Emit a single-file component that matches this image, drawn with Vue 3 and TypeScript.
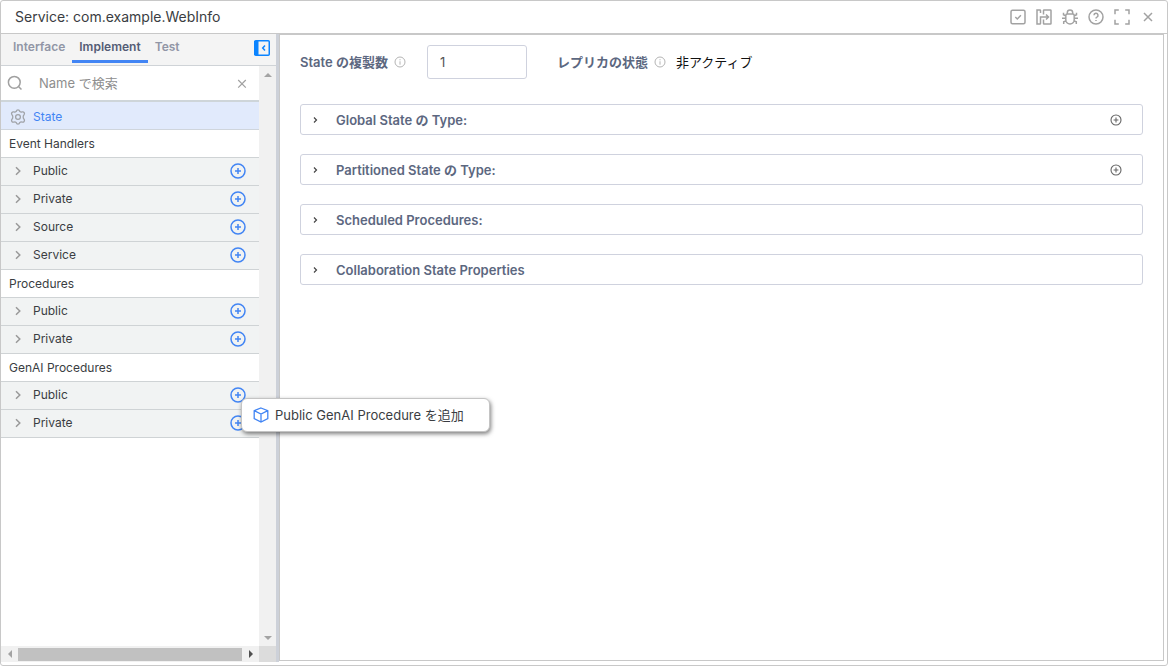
<script setup lang="ts">
import { ref } from 'vue'

interface Row {
  label: string
  menu?: boolean
}
interface Group {
  title: string
  rows: Row[]
}

const tabs = ['Interface', 'Implement', 'Test']
const activeTab = ref('Implement')
const search = ref('')
const replicas = ref('1')

const groups: Group[] = [
  { title: 'Event Handlers', rows: [{ label: 'Public' }, { label: 'Private' }, { label: 'Source' }, { label: 'Service' }] },
  { title: 'Procedures', rows: [{ label: 'Public' }, { label: 'Private' }] },
  { title: 'GenAI Procedures', rows: [{ label: 'Public', menu: true }, { label: 'Private' }] },
]

const sections = [
  { title: 'Global State の Type:', add: true },
  { title: 'Partitioned State の Type:', add: true },
  { title: 'Scheduled Procedures:', add: false },
  { title: 'Collaboration State Properties', add: false },
]
</script>

<template>
  <div class="window">
    <header class="titlebar">
      <h1>Service: com.example.WebInfo</h1>
      <div class="tools">
        <button aria-label="Validate">
          <svg viewBox="0 0 16 16"><rect x="1" y="1.2" width="14" height="13.6" rx="1.5" /><path d="M5.3 8l2 2 3.6-3.8" /></svg>
        </button>
        <button aria-label="References">
          <svg viewBox="0 0 16 16"><path d="M4.500 4V1.600Q4.500 1 3.900 1H1v14h2.900q.6 0 .6-.6V8H12.500M7.500 5.500V1.600q0-.6.6-.6h6.300q.6 0 .6.6v12.800q0 .6-.6.6H8.100q-.6 0-.6-.6V10.500M10 5.500L12.500 8 10 10.500" /></svg>
        </button>
        <button aria-label="Debug">
          <svg viewBox="0 0 16 16"><path d="M3.800 6.500Q3.800 5 5.300 5h5.400Q12.200 5 12.200 6.500V10.800a4.200 4.200 0 0 1-8.400 0zM5.300 5V3.700a2.700 2.700 0 0 1 5.400 0V5M4 7L1.500 5.800V3.800M12 7l2.500-1.200V3.800M4 9.300H0M12 9.300h4M4.500 11.600L1.700 12.800V15M11.500 11.600l2.800 1.200V15" /></svg>
        </button>
        <button aria-label="Help">
          <svg viewBox="0 0 16 16"><circle cx="8" cy="8" r="7" /><path d="M6 6.300a2 2 0 1 1 2.900 1.800Q8 8.500 8 9.500M8 10.900v1.200" /></svg>
        </button>
        <button aria-label="Full screen">
          <svg viewBox="0 0 16 16"><path d="M1 5.200V1h3.800M11.200 1H15v4.200M15 10.800V15h-3.800M4.800 15H1v-4.200" /></svg>
        </button>
        <button aria-label="Close">
          <svg viewBox="0 0 16 16"><path d="M4 4l8 8M12 4l-8 8" /></svg>
        </button>
      </div>
    </header>

    <div class="body">
      <aside class="sidebar">
        <nav class="tabs">
          <button v-for="t in tabs" :key="t" :class="{ active: t === activeTab }" @click="activeTab = t">{{ t }}</button>
          <button class="collapse" aria-label="Collapse panel">
            <svg viewBox="0 0 16 16"><rect x=".75" y=".75" width="14.5" height="14.5" rx="1" /><path class="fill" d="M0 1h4.500v14H0z" /><path d="M11 5.500L8.700 8l2.300 2.500" /></svg>
          </button>
        </nav>

        <div class="scroller">
          <div class="list">
            <div class="search">
              <svg class="lens" viewBox="0 0 16 16"><circle cx="7.300" cy="7.300" r="5.900" /><path d="M11.500 11.500l3 3" /></svg>
              <input v-model="search" type="text" placeholder="Name で検索" aria-label="Name で検索" />
              <button aria-label="Clear">
                <svg viewBox="0 0 16 16"><path d="M4.200 5l7.600 7.600M11.800 5l-7.600 7.600" /></svg>
              </button>
            </div>
            <a class="state" href="#state">
              <svg viewBox="0 0 16 16"><path d="M6.300 2.300Q6.600.8 8 .8T9.700 2.300L10.600 3Q11.200 3.200 12 2.900q1.500-.4 2.200.8t-.3 2.300Q13.200 6.600 13.200 8t.7 2q1 1.100.3 2.300t-2.200.8q-.8-.3-1.400-.1l-.9.7Q9.400 15.200 8 15.200T6.300 13.700L5.400 13Q4.800 12.800 4 13.100q-1.500.4-2.200-.8T2.100 10Q2.800 9.400 2.800 8T2.100 6q-1-1.100-.3-2.300T4 2.900q.8.300 1.400.1z" /><circle cx="8" cy="8" r="2.400" /></svg>
              <span>State</span>
            </a>
            <section v-for="g in groups" :key="g.title">
              <h2>{{ g.title }}</h2>
              <div v-for="r in g.rows" :key="r.label" class="row">
                <button class="toggle">
                  <svg viewBox="0 0 16 16"><path d="M6 4.300L9.800 8 6 11.700" /></svg>
                  <span>{{ r.label }}</span>
                </button>
                <button class="add" :aria-label="`${g.title} ${r.label} を追加`">
                  <svg viewBox="0 0 16 16"><circle cx="8" cy="8" r="7" /><path d="M8 5v6M5 8h6" /></svg>
                </button>
                <div v-if="r.menu" class="menu">
                  <button>
                    <svg viewBox="0 0 16 16"><path d="M8 1l6.800 2.700v8L8 15l-6.800-3.300v-8zM1.200 3.700L8 7l6.800-3.300M8 7v8" /></svg>
                    <span>Public GenAI Procedure を追加</span>
                  </button>
                </div>
              </div>
            </section>
          </div>
          <div class="vbar">
            <button aria-label="Scroll up"><svg viewBox="0 0 8 8"><path d="M0 6h8L4 2z" /></svg></button>
            <button aria-label="Scroll down"><svg viewBox="0 0 8 8"><path d="M0 2h8L4 6z" /></svg></button>
          </div>
        </div>
        <div class="hbar">
          <button aria-label="Scroll left"><svg viewBox="0 0 8 8"><path d="M6 0v8L2 4z" /></svg></button>
          <div class="thumb"></div>
          <button class="dark" aria-label="Scroll right"><svg viewBox="0 0 8 8"><path d="M2 0v8l4-4z" /></svg></button>
          <div class="corner"></div>
        </div>
      </aside>

      <div class="divider"></div>

      <main class="panel">
        <div class="fields">
          <label for="replicas">State の複製数</label>
          <svg class="info" viewBox="0 0 12 12"><circle cx="6" cy="6" r="5" /><path d="M6 5.300v3.400M6 3.200v1.100" /></svg>
          <input id="replicas" v-model="replicas" type="text" />
          <span class="caption">レプリカの状態</span>
          <svg class="info" viewBox="0 0 12 12"><circle cx="6" cy="6" r="5" /><path d="M6 5.300v3.400M6 3.200v1.100" /></svg>
          <span class="status">非アクティブ</span>
        </div>
        <div class="sections">
          <div v-for="s in sections" :key="s.title" class="section">
            <button class="expand">
              <svg viewBox="0 0 8 8"><path d="M3 1.500L5.500 4 3 6.500" /></svg>
              <span>{{ s.title }}</span>
            </button>
            <button v-if="s.add" class="plus" :aria-label="`${s.title} add`">
              <svg viewBox="0 0 12 12"><circle cx="6" cy="6" r="5" /><path d="M6 3.600v4.800M3.600 6h4.800" /></svg>
            </button>
          </div>
        </div>
      </main>
    </div>
  </div>
</template>

<style>
body {
  margin: 0;
  background: #fff;
}
</style>

<style scoped>
* {
  box-sizing: border-box;
}
.window {
  min-height: 100vh;
  display: flex;
  flex-direction: column;
  border: 1px solid #c8c8c8;
  border-radius: 3px;
  padding-bottom: 3px;
  background: #fff;
  color: #3a3d42;
  font: 13px/20px Inter, "Noto Sans CJK JP", sans-serif;
}
button {
  display: flex;
  align-items: center;
  margin: 0;
  padding: 0;
  border: 0;
  background: none;
  color: inherit;
  font: inherit;
  cursor: pointer;
}
svg {
  display: block;
  flex: none;
  width: 16px;
  height: 16px;
  fill: none;
  stroke: currentColor;
  stroke-width: 1.5;
}
.titlebar {
  display: flex;
  align-items: center;
  justify-content: space-between;
  height: 33px;
  padding: 0 11px 0 14px;
  border-bottom: 1px solid #c8c8c8;
}
h1 {
  margin: 0;
  font-size: 14px;
  font-weight: 400;
}
.tools {
  display: flex;
  gap: 10px;
  color: #a2a2a2;
}
.body {
  flex: 1;
  display: flex;
  padding-right: 3px;
}
.sidebar {
  width: 275px;
  flex: none;
  display: flex;
  flex-direction: column;
}
.tabs {
  display: flex;
  align-items: flex-start;
  height: 32px;
  padding: 0 6px 0 5px;
  border-bottom: 1px solid #cfd3d7;
  background: #f4f4f4;
}
.tabs button {
  height: 29px;
  padding: 0 7px 1px;
  border-bottom: 3px solid transparent;
  color: #9196a6;
  font-size: 12px;
  font-weight: 600;
}
.tabs .active {
  border-color: #4285f4;
  color: #545d76;
}
.tabs .collapse {
  height: 28px;
  margin-left: auto;
  padding: 0;
  border: 0;
  color: #0b84ff;
}
.fill {
  fill: currentColor;
  stroke: none;
}
.scroller {
  flex: 1;
  display: flex;
}
.list {
  flex: 1;
  min-width: 0;
}
.search {
  display: flex;
  align-items: center;
  height: 36px;
  padding: 0 9px 0 6px;
  border-bottom: 2px solid #ced5d9;
  color: #a0a0a0;
}
.search input {
  flex: 1;
  min-width: 0;
  padding: 0;
  margin-left: 16px;
  border: 0;
  outline: 0;
  background: none;
  color: #3a3d42;
  font: inherit;
}
.search input::placeholder {
  color: #8e8e8e;
  opacity: 1;
}
.search button svg {
  stroke-width: 1.2;
}
.state {
  display: flex;
  align-items: center;
  gap: 7px;
  height: 28px;
  padding: 2px 9px 0;
  border-bottom: 1px solid #cfd5dc;
  background: #e1eafc;
  color: #4285f4;
  font-size: 12px;
  text-decoration: none;
}
.state svg {
  color: #a0a3a8;
  stroke-width: 1.3;
}
h2 {
  height: 28px;
  margin: 0;
  padding: 0 8px;
  border-bottom: 1px solid #cfd3d5;
  font-size: 12px;
  font-weight: 400;
  line-height: 28px;
}
.row {
  position: relative;
  display: flex;
  align-items: center;
  height: 28px;
  padding: 0 13px 0 9px;
  border-bottom: 1px solid #cfd3d5;
  background: #f1f3f3;
}
.toggle {
  flex: 1;
  gap: 7px;
  padding-bottom: 2px;
  font-size: 12px;
}
.toggle svg {
  color: #999;
}
.add {
  padding-bottom: 1px;
  color: #4285f4;
}
.menu {
  position: absolute;
  z-index: 2;
  top: 16px;
  left: 240px;
  border: 1px solid #c4c4c4;
  border-radius: 6px;
  background: #fff;
  box-shadow: 1px 2px 4px rgba(0, 0, 0, 0.5);
}
.menu button {
  gap: 6px;
  height: 32px;
  padding: 0 25px 0 11px;
  white-space: nowrap;
}
.menu svg {
  color: #4285f4;
  stroke-width: 1.3;
}
.vbar {
  display: flex;
  flex: none;
  flex-direction: column;
  justify-content: space-between;
  width: 17px;
  background: #f1f1f1;
}
.vbar button,
.hbar button {
  justify-content: center;
  width: 17px;
  height: 17px;
  color: #a3a3a3;
}
.vbar svg,
.hbar svg {
  width: 8px;
  height: 8px;
  fill: currentColor;
  stroke: none;
}
.hbar {
  display: flex;
  align-items: center;
  height: 16px;
  background: #f1f1f1;
}
.thumb {
  flex: 1;
  height: 13px;
  background: #c1c1c1;
}
.hbar .dark {
  color: #505050;
}
.corner {
  width: 17px;
  height: 16px;
  background: #dcdcdc;
}
.divider {
  width: 3px;
  background: #cdd1d9;
}
.panel {
  flex: 1;
  min-width: 0;
  margin-bottom: 1px;
  padding: 10px 20px;
  border: 1px solid #c8c8c8;
}
.fields {
  display: flex;
  align-items: center;
}
.fields label,
.caption {
  color: #5c6780;
  font-weight: 600;
}
.fields .info {
  width: 12px;
  height: 12px;
  margin-left: 6px;
  color: #b4b4b4;
  stroke-width: 1;
}
.fields input {
  width: 100px;
  height: 34px;
  margin: 0 30px 0 21px;
  padding: 0 12px;
  border: 1px solid #cfd2de;
  border-radius: 3px;
  outline: 0;
  color: #555;
  font: inherit;
}
.status {
  margin-left: 10px;
  color: #111;
}
.sections {
  display: flex;
  flex-direction: column;
  gap: 19px;
  margin-top: 25px;
}
.section {
  display: flex;
  align-items: center;
  height: 31px;
  padding: 0 20px 0 10px;
  border: 1px solid #cfd2de;
  border-radius: 3px;
}
.expand {
  flex: 1;
  gap: 17px;
  color: #5c6780;
  font-weight: 600;
}
.expand svg {
  width: 8px;
  height: 8px;
  color: #444;
  stroke-width: 1.2;
}
.plus {
  color: #666;
}
.plus svg {
  width: 12px;
  height: 12px;
  stroke-width: 1.1;
}
</style>
